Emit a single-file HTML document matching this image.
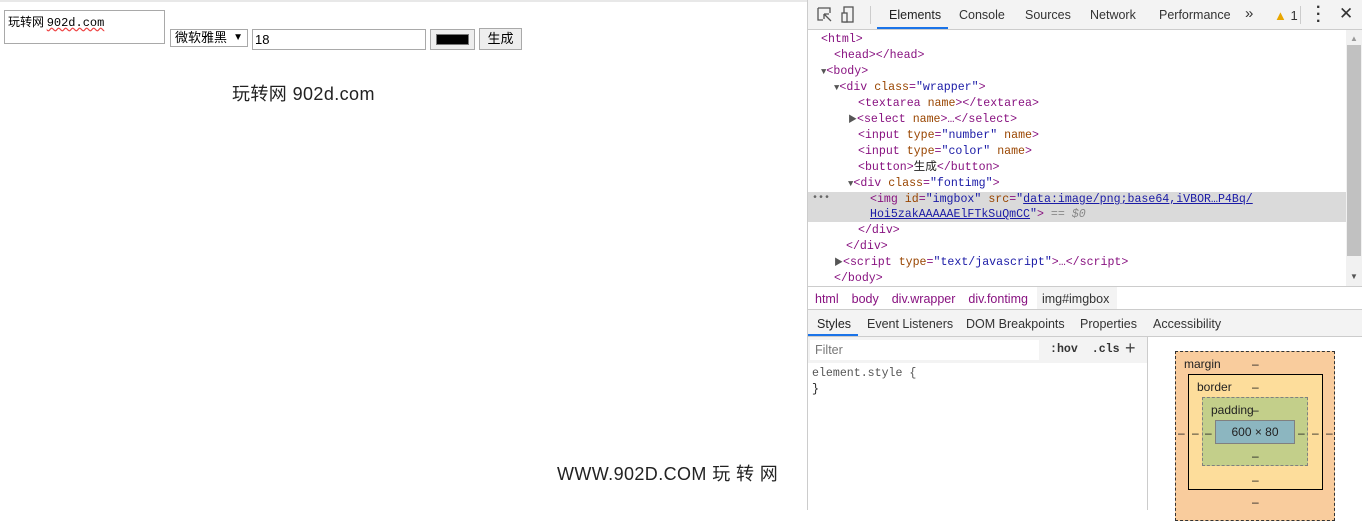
<!DOCTYPE html>
<html><head><meta charset="utf-8"><style>
*{box-sizing:border-box;margin:0;padding:0}
body{width:1362px;height:510px;overflow:hidden;background:#fff;font-family:"Liberation Sans","Noto Sans CJK SC",sans-serif;position:relative}
.a{position:absolute;white-space:nowrap}
.mono{font-family:"Liberation Mono","Noto Sans CJK SC",monospace;font-size:11.6px;color:#881280}
.at{color:#994500}.av{color:#1a1aa6}.tx{color:#222}.lk{color:#1a1aa6;text-decoration:underline}
.tab{position:absolute;top:8px;font-size:12.5px;color:#333}
.t2{position:absolute;top:317px;font-size:12.5px;color:#333}
.bm{position:absolute;font-size:12px;color:#222}
</style></head><body>
<div class="a" style="left:0;top:0;width:808px;height:2px;background:#e8e8e8"></div>
<div class="a" style="left:4px;top:10px;width:161px;height:34px;border:1px solid #a9a9a9;font-size:12px;padding:2px 3px;font-family:'Noto Sans CJK SC',sans-serif">玩转网 <span style="text-decoration:underline wavy #e44;font-family:'Liberation Mono',monospace">902d.com</span></div>
<div class="a" style="left:170px;top:29px;width:78px;height:18px;border:1px solid #a9a9a9;font-size:13px;padding-left:4px;line-height:16px">微软雅黑 <span style="font-size:10px;position:absolute;right:4px">▼</span></div>
<div class="a" style="left:252px;top:29px;width:174px;height:21px;border:1px solid #a9a9a9;font-size:13px;padding-left:2px;line-height:19px">18</div>
<div class="a" style="left:430px;top:29px;width:45px;height:21px;border:1px solid #a9a9a9;background:#eee;padding:4px 5px"><div style="background:#000;height:11px;border:1px solid #777"></div></div>
<div class="a" style="left:479px;top:28px;width:43px;height:22px;border:1px solid #a9a9a9;background:#eee;font-size:13px;text-align:center;line-height:20px">生成</div>
<div class="a" style="left:232px;top:80px;font-size:18px;color:#222;letter-spacing:0.4px">玩转网 902d.com</div>
<div class="a" style="left:557px;top:460px;font-size:18px;color:#222;letter-spacing:0.4px">WWW.902D.COM 玩 转 网</div>

<div class="a" style="left:807px;top:0;width:1px;height:510px;background:#ccc"></div>
<div class="a" style="left:808px;top:0;width:554px;height:30px;background:#f3f3f3;border-bottom:1px solid #ccc"></div>
<svg class="a" style="left:816px;top:6px" width="40" height="18"><path d="M2 2h12v5M2 2v12h5M8 8l7 7M8 8h5M8 8v5" stroke="#555" fill="none" stroke-width="1.3"/><rect x="28" y="1" width="9" height="15" fill="none" stroke="#555" stroke-width="1.3"/><rect x="26" y="7" width="5" height="9" fill="#f3f3f3" stroke="#555" stroke-width="1.3"/></svg>
<div class="a" style="left:870px;top:6px;width:1px;height:18px;background:#ccc"></div>
<div class="tab" style="left:889px;color:#222">Elements</div>
<div class="a" style="left:877px;top:27px;width:71px;height:2px;background:#1a73e8"></div>
<div class="tab" style="left:959px">Console</div>
<div class="tab" style="left:1025px">Sources</div>
<div class="tab" style="left:1090px">Network</div>
<div class="tab" style="left:1159px">Performance</div>
<div class="tab" style="left:1245px;top:5px;font-size:15px">»</div>
<div class="tab" style="left:1274px;color:#e8a600;font-size:13px">▲<span style="color:#333"> 1</span></div>
<div class="a" style="left:1300px;top:6px;width:1px;height:18px;background:#ccc"></div>
<div class="tab" style="left:1316px;top:4px;font-size:16px;font-weight:bold;line-height:7px">·<br>·<br>·</div>
<div class="tab" style="left:1339px;top:4px;font-size:17px">✕</div>

<div class="a" style="left:808px;top:192px;width:538px;height:30px;background:#dadada"></div>
<div class="a mono" style="left:812px;top:193px;color:#666;font-size:10px">•••</div>
<div class="a mono" style="left:821px;top:32px;line-height:16px">
<div>&lt;html&gt;</div>
<div style="padding-left:13px">&lt;head&gt;&lt;/head&gt;</div>
<div><span style="color:#555;font-size:9px">▼</span>&lt;body&gt;</div>
<div style="padding-left:13px"><span style="color:#555;font-size:9px">▼</span>&lt;div <span class="at">class</span>=<span class="av">"wrapper"</span>&gt;</div>
<div style="padding-left:37px">&lt;textarea <span class="at">name</span>&gt;&lt;/textarea&gt;</div>
<div style="padding-left:27px"><span style="color:#555;font-size:9px">▶</span>&lt;select <span class="at">name</span>&gt;…&lt;/select&gt;</div>
<div style="padding-left:37px">&lt;input <span class="at">type</span>=<span class="av">"number"</span> <span class="at">name</span>&gt;</div>
<div style="padding-left:37px">&lt;input <span class="at">type</span>=<span class="av">"color"</span> <span class="at">name</span>&gt;</div>
<div style="padding-left:37px">&lt;button&gt;<span class="tx">生成</span>&lt;/button&gt;</div>
<div style="padding-left:27px"><span style="color:#555;font-size:9px">▼</span>&lt;div <span class="at">class</span>=<span class="av">"fontimg"</span>&gt;</div>
<div style="padding-left:49px">&lt;img <span class="at">id</span>=<span class="av">"imgbox"</span> <span class="at">src</span>=<span class="av">"<span class="lk">data:image/png;base64,iVBOR…P4Bq/</span></span></div>
<div style="padding-left:49px;margin-top:-1px"><span class="lk">Hoi5zakAAAAAElFTkSuQmCC</span><span class="av">"</span>&gt; <span style="color:#888">== <i>$0</i></span></div>
<div style="padding-left:37px">&lt;/div&gt;</div>
<div style="padding-left:25px">&lt;/div&gt;</div>
<div style="padding-left:13px"><span style="color:#555;font-size:9px">▶</span>&lt;script <span class="at">type</span>=<span class="av">"text/javascript"</span>&gt;…&lt;/script&gt;</div>
<div style="padding-left:13px">&lt;/body&gt;</div>
</div>
<div class="a" style="left:1346px;top:30px;width:16px;height:256px;background:#f1f1f1"></div>
<div class="a" style="left:1347px;top:45px;width:14px;height:211px;background:#c1c1c1"></div>
<div class="a" style="left:1350px;top:34px;font-size:8px;color:#999">▲</div>
<div class="a" style="left:1350px;top:272px;font-size:8px;color:#555">▼</div>

<div class="a" style="left:808px;top:286px;width:554px;height:1px;background:#ccc"></div>
<div class="a" style="left:1037px;top:287px;width:80px;height:22px;background:#f3f3f3"></div>
<div class="a" style="left:815px;top:292px;font-size:12.5px;color:#881280">html<span style="margin-left:13px">body</span><span style="margin-left:13px">div.wrapper</span><span style="margin-left:13px">div.fontimg</span><span style="margin-left:14px;color:#333">img#imgbox</span></div>
<div class="a" style="left:808px;top:309px;width:554px;height:28px;background:#f3f3f3;border-top:1px solid #ccc;border-bottom:1px solid #ccc"></div>
<div class="t2" style="left:817px;color:#222">Styles</div>
<div class="a" style="left:808px;top:334px;width:50px;height:2px;background:#1a73e8"></div>
<div class="t2" style="left:867px">Event Listeners</div>
<div class="t2" style="left:966px">DOM Breakpoints</div>
<div class="t2" style="left:1080px">Properties</div>
<div class="t2" style="left:1153px">Accessibility</div>
<div class="a" style="left:808px;top:337px;width:339px;height:26px;background:#f3f3f3"></div>
<div class="a" style="left:810px;top:340px;width:229px;height:20px;background:#fff;font-size:12.5px;color:#777;padding:3px 5px">Filter</div>
<div class="a mono" style="left:1050px;top:343px;color:#333;font-weight:bold">:hov &nbsp;.cls</div>
<div class="a" style="left:1125px;top:338px;font-size:18px;color:#444">+</div>
<div class="a mono" style="left:812px;top:366px;color:#555;line-height:16px">element.style {<br><span style="color:#222">}</span></div>
<div class="a" style="left:1147px;top:337px;width:1px;height:173px;background:#ccc"></div>

<div class="a" style="left:1175px;top:351px;width:160px;height:170px;background:#f9cc9d;border:1px dashed #333"></div>
<div class="a" style="left:1188px;top:374px;width:135px;height:116px;background:#fddd9b;border:1px solid #000"></div>
<div class="a" style="left:1202px;top:397px;width:106px;height:69px;background:#c3cf8a;border:1px dashed #808080"></div>
<div class="a" style="left:1215px;top:420px;width:80px;height:24px;background:#8cb6c0;border:1px solid #808080;font-size:12px;text-align:center;line-height:22px;color:#222">600 × 80</div>
<div class="bm" style="left:1184px;top:357px">margin</div>
<div class="bm" style="left:1252px;top:357px">–</div>
<div class="bm" style="left:1197px;top:380px">border</div>
<div class="bm" style="left:1252px;top:380px">–</div>
<div class="bm" style="left:1211px;top:403px">padding</div>
<div class="bm" style="left:1252px;top:403px">–</div>
<div class="bm" style="left:1252px;top:449px">–</div>
<div class="bm" style="left:1252px;top:473px">–</div>
<div class="bm" style="left:1252px;top:495px">–</div>
<div class="bm" style="left:1178px;top:426px">–</div>
<div class="bm" style="left:1192px;top:426px">–</div>
<div class="bm" style="left:1205px;top:426px">–</div>
<div class="bm" style="left:1298px;top:426px">–</div>
<div class="bm" style="left:1312px;top:426px">–</div>
<div class="bm" style="left:1326px;top:426px">–</div>
</body></html>
